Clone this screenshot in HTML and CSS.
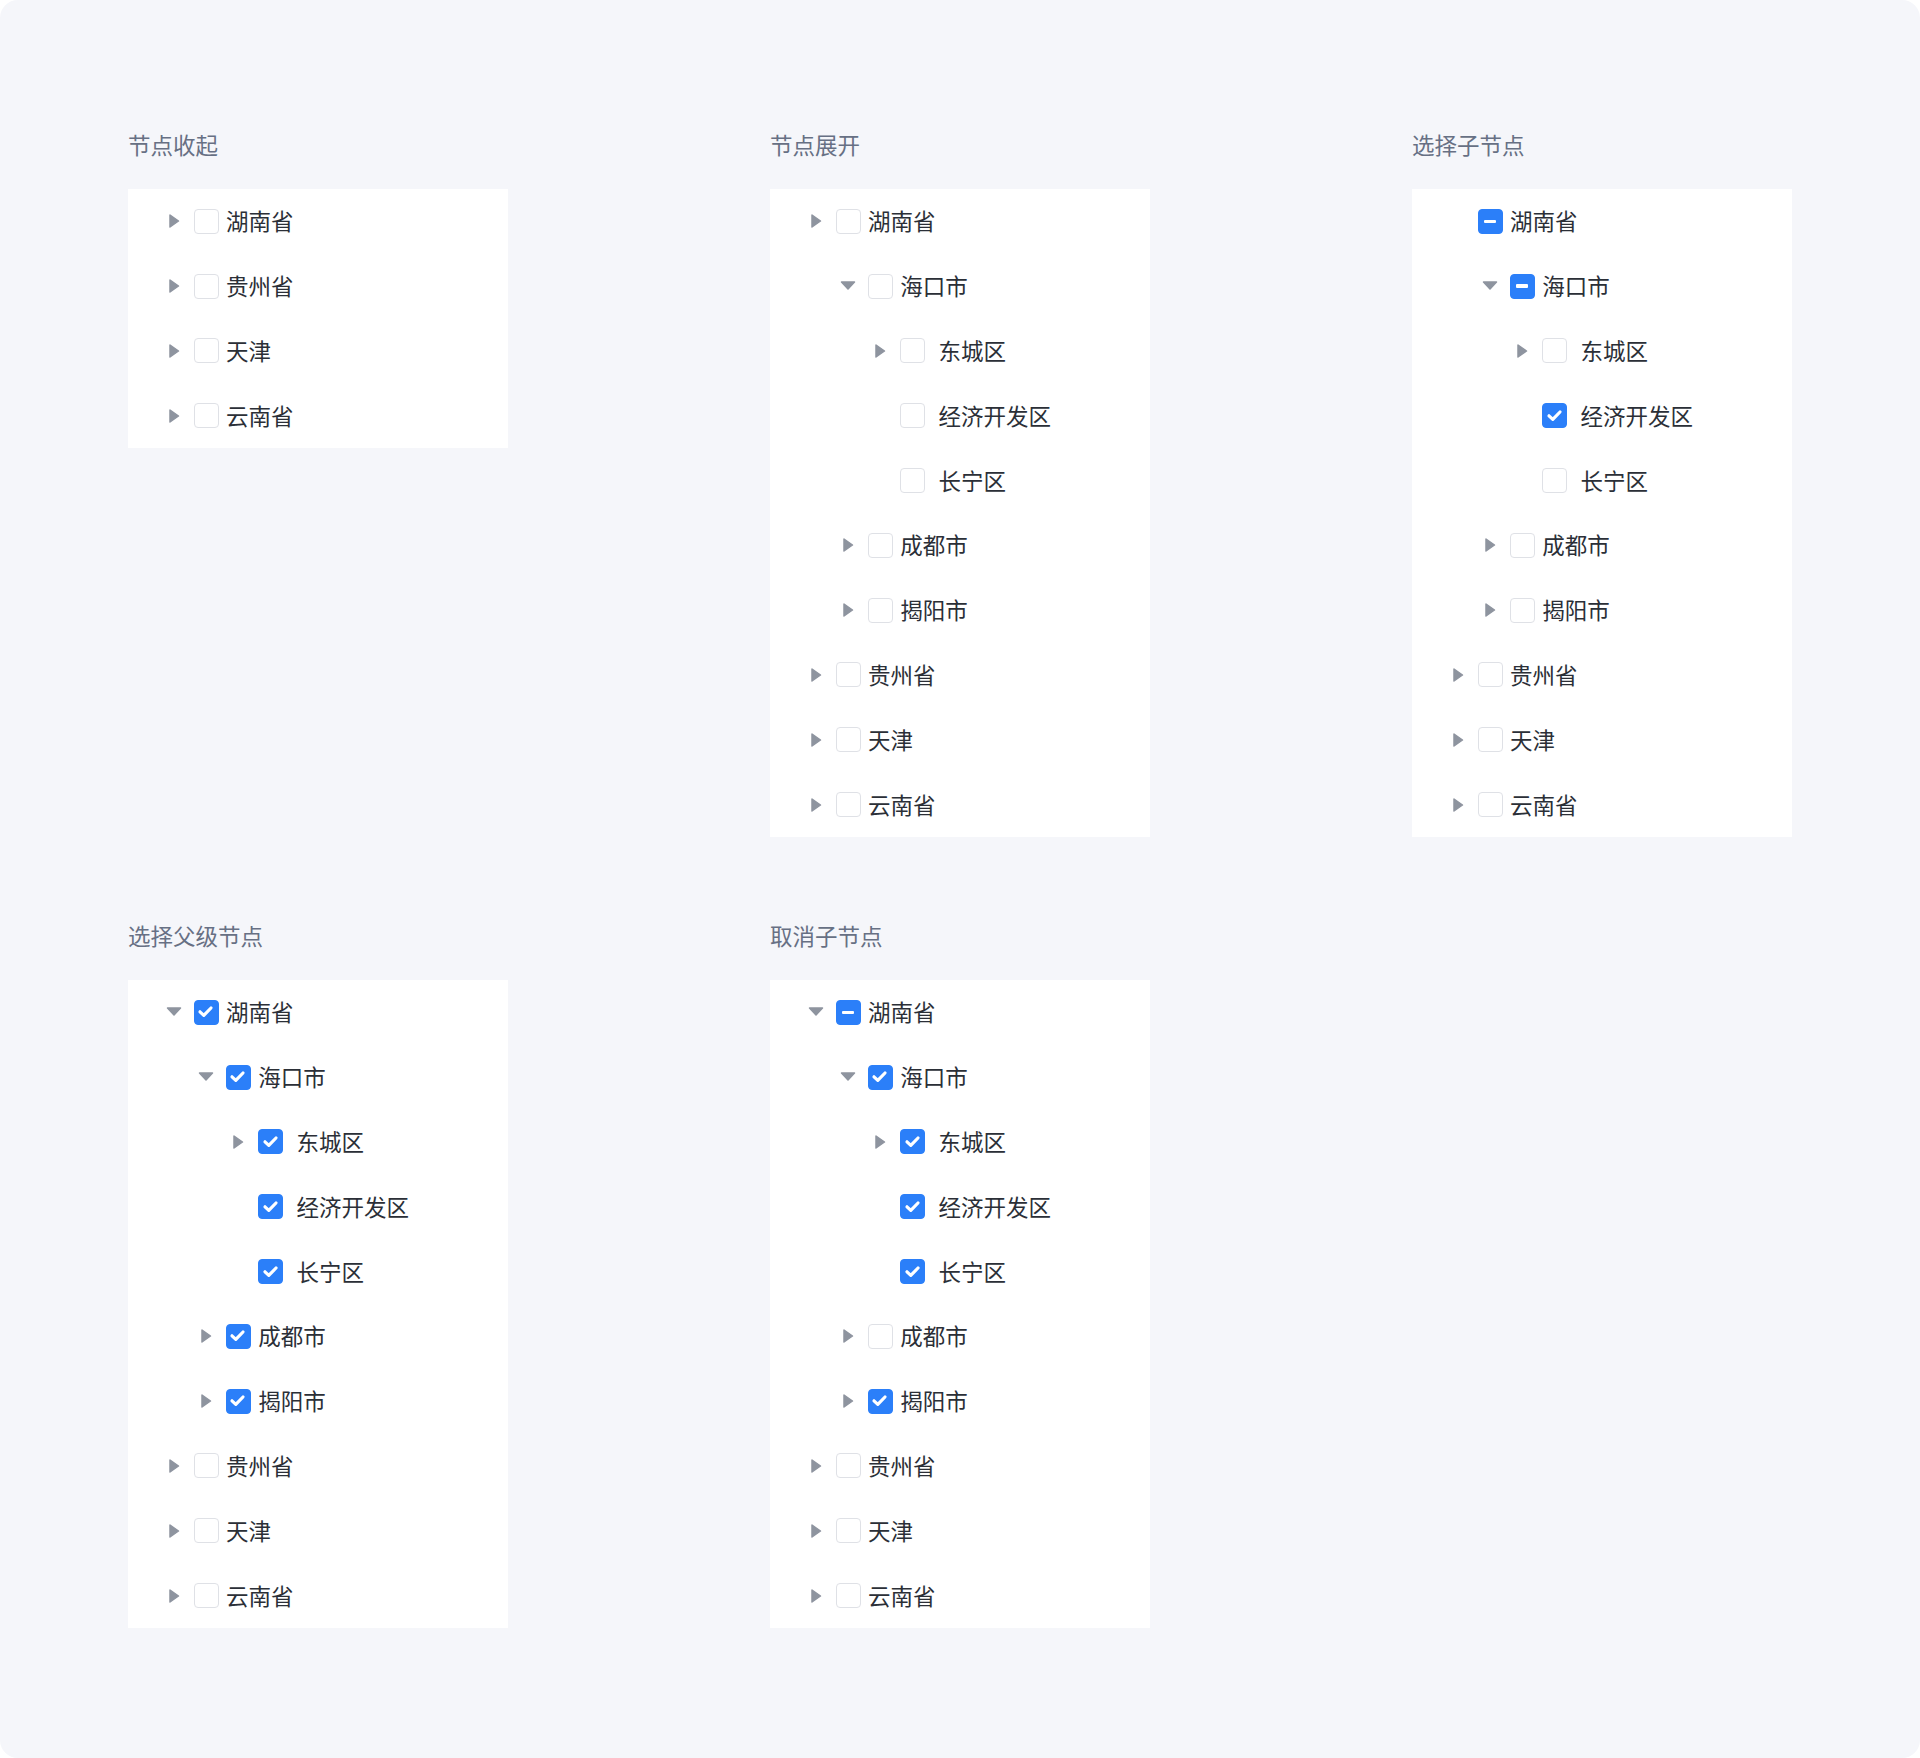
FILE: index.html
```html
<!DOCTYPE html>
<html lang="zh-CN">
<head>
<meta charset="utf-8">
<title>Tree</title>
<link rel="stylesheet" href="styles.css">
</head>
<body>
<div class="page">
  <div class="grid">

    <section class="demo">
      <h2 class="demo-title">节点收起</h2>
      <div class="tree">
        <div class="row l1"><span class="arrow"><svg viewBox="0 0 16 16"><path class="tri" d="M4 2 L12.5 8 L4 14 Z"/></svg></span><span class="cb"></span><span class="label">湖南省</span></div>
        <div class="row l1"><span class="arrow"><svg viewBox="0 0 16 16"><path class="tri" d="M4 2 L12.5 8 L4 14 Z"/></svg></span><span class="cb"></span><span class="label">贵州省</span></div>
        <div class="row l1"><span class="arrow"><svg viewBox="0 0 16 16"><path class="tri" d="M4 2 L12.5 8 L4 14 Z"/></svg></span><span class="cb"></span><span class="label">天津</span></div>
        <div class="row l1"><span class="arrow"><svg viewBox="0 0 16 16"><path class="tri" d="M4 2 L12.5 8 L4 14 Z"/></svg></span><span class="cb"></span><span class="label">云南省</span></div>
      </div>
    </section>

    <section class="demo">
      <h2 class="demo-title">节点展开</h2>
      <div class="tree">
        <div class="row l1"><span class="arrow"><svg viewBox="0 0 16 16"><path class="tri" d="M4 2 L12.5 8 L4 14 Z"/></svg></span><span class="cb"></span><span class="label">湖南省</span></div>
        <div class="row l2"><span class="arrow"><svg viewBox="0 0 16 16"><path class="tri" d="M1.5 4 L14.5 4 L8 11 Z"/></svg></span><span class="cb"></span><span class="label">海口市</span></div>
        <div class="row l3"><span class="arrow"><svg viewBox="0 0 16 16"><path class="tri" d="M4 2 L12.5 8 L4 14 Z"/></svg></span><span class="cb"></span><span class="label">东城区</span></div>
        <div class="row l3"><span class="arrow"></span><span class="cb"></span><span class="label">经济开发区</span></div>
        <div class="row l3"><span class="arrow"></span><span class="cb"></span><span class="label">长宁区</span></div>
        <div class="row l2"><span class="arrow"><svg viewBox="0 0 16 16"><path class="tri" d="M4 2 L12.5 8 L4 14 Z"/></svg></span><span class="cb"></span><span class="label">成都市</span></div>
        <div class="row l2"><span class="arrow"><svg viewBox="0 0 16 16"><path class="tri" d="M4 2 L12.5 8 L4 14 Z"/></svg></span><span class="cb"></span><span class="label">揭阳市</span></div>
        <div class="row l1"><span class="arrow"><svg viewBox="0 0 16 16"><path class="tri" d="M4 2 L12.5 8 L4 14 Z"/></svg></span><span class="cb"></span><span class="label">贵州省</span></div>
        <div class="row l1"><span class="arrow"><svg viewBox="0 0 16 16"><path class="tri" d="M4 2 L12.5 8 L4 14 Z"/></svg></span><span class="cb"></span><span class="label">天津</span></div>
        <div class="row l1"><span class="arrow"><svg viewBox="0 0 16 16"><path class="tri" d="M4 2 L12.5 8 L4 14 Z"/></svg></span><span class="cb"></span><span class="label">云南省</span></div>
      </div>
    </section>

    <section class="demo">
      <h2 class="demo-title">选择子节点</h2>
      <div class="tree">
        <div class="row l1"><span class="arrow"></span><span class="cb on part"></span><span class="label">湖南省</span></div>
        <div class="row l2"><span class="arrow"><svg viewBox="0 0 16 16"><path class="tri" d="M1.5 4 L14.5 4 L8 11 Z"/></svg></span><span class="cb on part"></span><span class="label">海口市</span></div>
        <div class="row l3"><span class="arrow"><svg viewBox="0 0 16 16"><path class="tri" d="M4 2 L12.5 8 L4 14 Z"/></svg></span><span class="cb"></span><span class="label">东城区</span></div>
        <div class="row l3"><span class="arrow"></span><span class="cb on"><svg viewBox="0 0 25 25"><path class="tick" d="M7 12.8 L10.8 16.4 L18 9"/></svg></span><span class="label">经济开发区</span></div>
        <div class="row l3"><span class="arrow"></span><span class="cb"></span><span class="label">长宁区</span></div>
        <div class="row l2"><span class="arrow"><svg viewBox="0 0 16 16"><path class="tri" d="M4 2 L12.5 8 L4 14 Z"/></svg></span><span class="cb"></span><span class="label">成都市</span></div>
        <div class="row l2"><span class="arrow"><svg viewBox="0 0 16 16"><path class="tri" d="M4 2 L12.5 8 L4 14 Z"/></svg></span><span class="cb"></span><span class="label">揭阳市</span></div>
        <div class="row l1"><span class="arrow"><svg viewBox="0 0 16 16"><path class="tri" d="M4 2 L12.5 8 L4 14 Z"/></svg></span><span class="cb"></span><span class="label">贵州省</span></div>
        <div class="row l1"><span class="arrow"><svg viewBox="0 0 16 16"><path class="tri" d="M4 2 L12.5 8 L4 14 Z"/></svg></span><span class="cb"></span><span class="label">天津</span></div>
        <div class="row l1"><span class="arrow"><svg viewBox="0 0 16 16"><path class="tri" d="M4 2 L12.5 8 L4 14 Z"/></svg></span><span class="cb"></span><span class="label">云南省</span></div>
      </div>
    </section>

    <section class="demo">
      <h2 class="demo-title">选择父级节点</h2>
      <div class="tree">
        <div class="row l1"><span class="arrow"><svg viewBox="0 0 16 16"><path class="tri" d="M1.5 4 L14.5 4 L8 11 Z"/></svg></span><span class="cb on"><svg viewBox="0 0 25 25"><path class="tick" d="M7 12.8 L10.8 16.4 L18 9"/></svg></span><span class="label">湖南省</span></div>
        <div class="row l2"><span class="arrow"><svg viewBox="0 0 16 16"><path class="tri" d="M1.5 4 L14.5 4 L8 11 Z"/></svg></span><span class="cb on"><svg viewBox="0 0 25 25"><path class="tick" d="M7 12.8 L10.8 16.4 L18 9"/></svg></span><span class="label">海口市</span></div>
        <div class="row l3"><span class="arrow"><svg viewBox="0 0 16 16"><path class="tri" d="M4 2 L12.5 8 L4 14 Z"/></svg></span><span class="cb on"><svg viewBox="0 0 25 25"><path class="tick" d="M7 12.8 L10.8 16.4 L18 9"/></svg></span><span class="label">东城区</span></div>
        <div class="row l3"><span class="arrow"></span><span class="cb on"><svg viewBox="0 0 25 25"><path class="tick" d="M7 12.8 L10.8 16.4 L18 9"/></svg></span><span class="label">经济开发区</span></div>
        <div class="row l3"><span class="arrow"></span><span class="cb on"><svg viewBox="0 0 25 25"><path class="tick" d="M7 12.8 L10.8 16.4 L18 9"/></svg></span><span class="label">长宁区</span></div>
        <div class="row l2"><span class="arrow"><svg viewBox="0 0 16 16"><path class="tri" d="M4 2 L12.5 8 L4 14 Z"/></svg></span><span class="cb on"><svg viewBox="0 0 25 25"><path class="tick" d="M7 12.8 L10.8 16.4 L18 9"/></svg></span><span class="label">成都市</span></div>
        <div class="row l2"><span class="arrow"><svg viewBox="0 0 16 16"><path class="tri" d="M4 2 L12.5 8 L4 14 Z"/></svg></span><span class="cb on"><svg viewBox="0 0 25 25"><path class="tick" d="M7 12.8 L10.8 16.4 L18 9"/></svg></span><span class="label">揭阳市</span></div>
        <div class="row l1"><span class="arrow"><svg viewBox="0 0 16 16"><path class="tri" d="M4 2 L12.5 8 L4 14 Z"/></svg></span><span class="cb"></span><span class="label">贵州省</span></div>
        <div class="row l1"><span class="arrow"><svg viewBox="0 0 16 16"><path class="tri" d="M4 2 L12.5 8 L4 14 Z"/></svg></span><span class="cb"></span><span class="label">天津</span></div>
        <div class="row l1"><span class="arrow"><svg viewBox="0 0 16 16"><path class="tri" d="M4 2 L12.5 8 L4 14 Z"/></svg></span><span class="cb"></span><span class="label">云南省</span></div>
      </div>
    </section>

    <section class="demo">
      <h2 class="demo-title">取消子节点</h2>
      <div class="tree">
        <div class="row l1"><span class="arrow"><svg viewBox="0 0 16 16"><path class="tri" d="M1.5 4 L14.5 4 L8 11 Z"/></svg></span><span class="cb on part"></span><span class="label">湖南省</span></div>
        <div class="row l2"><span class="arrow"><svg viewBox="0 0 16 16"><path class="tri" d="M1.5 4 L14.5 4 L8 11 Z"/></svg></span><span class="cb on"><svg viewBox="0 0 25 25"><path class="tick" d="M7 12.8 L10.8 16.4 L18 9"/></svg></span><span class="label">海口市</span></div>
        <div class="row l3"><span class="arrow"><svg viewBox="0 0 16 16"><path class="tri" d="M4 2 L12.5 8 L4 14 Z"/></svg></span><span class="cb on"><svg viewBox="0 0 25 25"><path class="tick" d="M7 12.8 L10.8 16.4 L18 9"/></svg></span><span class="label">东城区</span></div>
        <div class="row l3"><span class="arrow"></span><span class="cb on"><svg viewBox="0 0 25 25"><path class="tick" d="M7 12.8 L10.8 16.4 L18 9"/></svg></span><span class="label">经济开发区</span></div>
        <div class="row l3"><span class="arrow"></span><span class="cb on"><svg viewBox="0 0 25 25"><path class="tick" d="M7 12.8 L10.8 16.4 L18 9"/></svg></span><span class="label">长宁区</span></div>
        <div class="row l2"><span class="arrow"><svg viewBox="0 0 16 16"><path class="tri" d="M4 2 L12.5 8 L4 14 Z"/></svg></span><span class="cb"></span><span class="label">成都市</span></div>
        <div class="row l2"><span class="arrow"><svg viewBox="0 0 16 16"><path class="tri" d="M4 2 L12.5 8 L4 14 Z"/></svg></span><span class="cb on"><svg viewBox="0 0 25 25"><path class="tick" d="M7 12.8 L10.8 16.4 L18 9"/></svg></span><span class="label">揭阳市</span></div>
        <div class="row l1"><span class="arrow"><svg viewBox="0 0 16 16"><path class="tri" d="M4 2 L12.5 8 L4 14 Z"/></svg></span><span class="cb"></span><span class="label">贵州省</span></div>
        <div class="row l1"><span class="arrow"><svg viewBox="0 0 16 16"><path class="tri" d="M4 2 L12.5 8 L4 14 Z"/></svg></span><span class="cb"></span><span class="label">天津</span></div>
        <div class="row l1"><span class="arrow"><svg viewBox="0 0 16 16"><path class="tri" d="M4 2 L12.5 8 L4 14 Z"/></svg></span><span class="cb"></span><span class="label">云南省</span></div>
      </div>
    </section>

  </div>
</div>
</body>
</html>
```

FILE: styles.css
```css
* { box-sizing: border-box; }

html, body {
  margin: 0;
  padding: 0;
  background: #ffffff;
}

body {
  font-family: "Noto Sans CJK SC", "Noto Sans", sans-serif;
}

.page {
  width: 1920px;
  height: 1758px;
  background: #f5f6fa;
  border-radius: 18px;
  padding: 129px 128px 0 128px;
}

.grid {
  display: grid;
  grid-template-columns: repeat(3, 380px);
  justify-content: space-between;
  row-gap: 83px;
  align-items: start;
}

.demo-title {
  margin: 0 0 30px 0;
  font-size: 22.5px;
  line-height: 30px;
  font-weight: 400;
  color: #677084;
}

.tree {
  background: #ffffff;
}

.row {
  display: flex;
  align-items: center;
  height: 64.8px;
}

.row.l1 { padding-left: 33.5px; }
.row.l2 { padding-left: 65.8px; }
.row.l3 { padding-left: 98.1px; }

.arrow {
  width: 24px;
  height: 16px;
  margin-right: 8px;
  display: flex;
  align-items: center;
  justify-content: center;
  flex: none;
}

.arrow svg {
  width: 16px;
  height: 16px;
  display: block;
}

.tri {
  fill: #8e949f;
  stroke: #8e949f;
  stroke-width: 1.5;
  stroke-linejoin: round;
}

.cb {
  width: 25px;
  height: 25px;
  flex: none;
  border: 1.5px solid #dfe1e6;
  border-radius: 4px;
  background: #ffffff;
  position: relative;
  display: flex;
  align-items: center;
  justify-content: center;
}

.cb.on {
  background: #2b7ff9;
  border-color: #2b7ff9;
}

.cb svg {
  position: absolute;
  left: -1.5px;
  top: -1.5px;
  width: 25px;
  height: 25px;
  display: block;
}

.tick {
  fill: none;
  stroke: #ffffff;
  stroke-width: 3.2;
  stroke-linecap: round;
  stroke-linejoin: round;
}

.cb.part::after {
  content: "";
  width: 12px;
  height: 3.5px;
  border-radius: 1px;
  background: #ffffff;
}

.label {
  margin-left: 7.5px;
  padding-bottom: 2px;
  font-size: 22.5px;
  line-height: 30px;
  color: #2b2f37;
  white-space: nowrap;
}

.row.l3 .label {
  margin-left: 13.5px;
}
```
